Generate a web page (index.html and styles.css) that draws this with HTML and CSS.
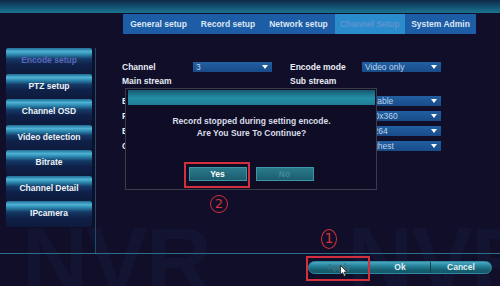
FILE: index.html
```html
<!DOCTYPE html>
<html>
<head>
<meta charset="utf-8">
<link rel="stylesheet" href="styles.css">
</head>
<body>
<div class="screen">
  <div class="wm wm-bl" aria-hidden="true">NVR</div>
  <div class="wm wm-br" aria-hidden="true">NVR</div>

  <div class="topbar"></div>

  <div class="main">
    <div class="sidebar">
      <div class="menu-btn active">Encode setup</div>
      <div class="menu-btn">PTZ setup</div>
      <div class="menu-btn">Channel OSD</div>
      <div class="menu-btn">Video detection</div>
      <div class="menu-btn">Bitrate</div>
      <div class="menu-btn">Channel Detail</div>
      <div class="menu-btn">IPcamera</div>
    </div>

    <div class="content">
      <div class="tabs">
        <div class="tab t1">General setup</div>
        <div class="tab t2">Record setup</div>
        <div class="tab t3">Network setup</div>
        <div class="tab t4 active">Channel Setup</div>
        <div class="tab t5">System Admin</div>
      </div>

      <div class="form">
        <div class="row first">
          <div class="lbl">Channel</div>
          <div class="sel">3</div>
          <div class="spacer"></div>
          <div class="lbl lbl2">Encode mode</div>
          <div class="sel">Video only</div>
        </div>
        <div class="row stream">
          <div class="lbl">Main stream</div>
          <div class="gap-sel"></div>
          <div class="spacer"></div>
          <div class="lbl lbl2">Sub stream</div>
        </div>
        <div class="row opt first-opt">
          <div class="lbl">Enable audio</div>
          <div class="sel">Disable</div>
          <div class="spacer"></div>
          <div class="lbl lbl2">Enable audio</div>
          <div class="sel">Disable</div>
        </div>
        <div class="row opt">
          <div class="lbl">Frame size</div>
          <div class="sel">1920x1080</div>
          <div class="spacer"></div>
          <div class="lbl lbl2">Frame size</div>
          <div class="sel">640x360</div>
        </div>
        <div class="row opt">
          <div class="lbl">Encode type</div>
          <div class="sel">H.264</div>
          <div class="spacer"></div>
          <div class="lbl lbl2">Encode type</div>
          <div class="sel">H.264</div>
        </div>
        <div class="row opt">
          <div class="lbl">Code quality</div>
          <div class="sel">Highest</div>
          <div class="spacer"></div>
          <div class="lbl lbl2">Code quality</div>
          <div class="sel">Highest</div>
        </div>
      </div>
    </div>
  </div>

  <div class="footer">
    <div class="btn-group">
      <div class="fbtn apply">Apply</div>
      <div class="fbtn">Ok</div>
      <div class="fbtn">Cancel</div>
    </div>
  </div>

  <div class="dialog">
    <div class="dlg-title"></div>
    <div class="dlg-msg">
      <div>Record stopped during setting encode.</div>
      <div>Are You Sure To Continue?</div>
    </div>
    <div class="dlg-btns">
      <div class="dbtn yes">Yes</div>
      <div class="dbtn no">No</div>
    </div>
  </div>

  <div class="mark box-yes"></div>
  <div class="mark box-apply"></div>
  <div class="num num2">2</div>
  <div class="num num1">1</div>

  <svg class="cursor" width="8" height="12" viewBox="0 0 8 12">
    <path d="M0.5 0.5 L0.5 9.5 L2.6 7.6 L4.2 11.2 L5.6 10.6 L4.1 7.1 L7 7.1 Z" fill="#ffffff" stroke="#222" stroke-width="0.8"/>
  </svg>
</div>
</body>
</html>
```

FILE: styles.css
```css
* { box-sizing: border-box; }
html, body { margin: 0; padding: 0; }
body { background: #100e28; }

.screen {
  position: relative;
  width: 500px;
  height: 286px;
  overflow: hidden;
  background: #100e28;
  font-family: "Liberation Sans", Arial, sans-serif;
  font-weight: bold;
  font-size: 8.5px;
  color: #e4e9f2;
}

.wm {
  position: absolute;
  z-index: 0;
  font-family: "Liberation Sans", Arial, sans-serif;
  font-weight: bold;
  font-size: 92px;
  line-height: 1;
  color: #131332;
  letter-spacing: -2px;
}
.wm-bl { left: 22px; top: 214px; }
.wm-br { left: 347px; top: 214px; }

.topbar {
  position: relative;
  z-index: 1;
  height: 13px;
  background: linear-gradient(to bottom, #0e2a48 0%, #145272 55%, #1b7590 100%);
}

.main {
  position: relative;
  z-index: 1;
  display: flex;
  height: 241px;
  border-bottom: 1px solid #2a6e8a;
}

.sidebar {
  width: 96px;
  margin-top: 35px;
  padding-left: 6px;
  border-right: 1px solid #1b4e68;
}

.menu-btn {
  width: 86px;
  height: 25.5px;
  padding-top: 8px;
  text-align: center;
  line-height: 9px;
  border-radius: 2px;
  color: #eef2f8;
  white-space: nowrap;
  background: linear-gradient(to bottom,
    #1f6d96 0%, #4fb2d4 14%, #2a84ac 26%, #143a66 42%, #0f2048 65%, #0d1a3c 100%);
}
.menu-btn.active { color: #5c66bc; }

.content {
  flex: 1;
  padding-left: 26px;
}

.tabs {
  display: flex;
  margin-top: 1px;
  margin-left: 1px;
  height: 20px;
  width: 353px;
  background: #1d5da6;
}
.tab {
  line-height: 20px;
  text-align: center;
  color: #dbe6f4;
  white-space: nowrap;
}
.t1 { width: 71px; }
.t2 { width: 68px; }
.t3 { width: 73px; }
.t4 { width: 70px; }
.t5 { width: 71px; }
.tab.active { background: #2b8ccd; color: #5f93cf; }

.form { display: flex; flex-direction: column; }
.row {
  display: flex;
  height: 10px;
  align-items: center;
  margin-top: 5px;
}
.row.first { margin-top: 28px; }
.row.stream { margin-top: 4px; }
.row.first-opt { margin-top: 10px; }

.lbl { width: 71px; white-space: nowrap; overflow: hidden; color: #e8ecf4; }
.lbl2 { width: 72px; }
.spacer { width: 18px; }
.gap-sel { width: 79px; }

.sel {
  position: relative;
  width: 79px;
  height: 10px;
  line-height: 10px;
  padding-left: 3px;
  font-weight: normal;
  color: #b9d2ec;
  background: linear-gradient(to bottom, #215fa2, #194b88);
}
.sel::after {
  content: "";
  position: absolute;
  right: 4px;
  top: 3px;
  width: 0;
  height: 0;
  border-left: 3px solid transparent;
  border-right: 3px solid transparent;
  border-top: 4px solid #ffffff;
}

.footer {
  position: relative;
  z-index: 1;
  display: flex;
  justify-content: flex-end;
  padding: 7px 8px 0 0;
}
.btn-group {
  display: flex;
  height: 13px;
  border-radius: 7px;
  overflow: hidden;
  border: 1px solid #2e8aa2;
  background: linear-gradient(to bottom, #4ba8c0 0%, #26849c 35%, #176274 70%, #14566a 100%);
}
.fbtn {
  width: 61px;
  line-height: 11px;
  text-align: center;
  color: #e2f0f5;
  border-left: 1px solid #0f4050;
}
.fbtn:first-child { border-left: none; width: 60px; }
.fbtn.apply { color: #3c7282; }

.dialog {
  position: absolute;
  z-index: 5;
  left: 125px;
  top: 88px;
  width: 252px;
  height: 102px;
  padding: 1px 1px 0 2px;
  background: #0f0d26;
  border: 1px solid #3a3c48;
}
.dlg-title {
  height: 15px;
  background: linear-gradient(to bottom, #17586e 0%, #2390a8 55%, #1f7c94 100%);
}
.dlg-msg {
  margin-top: 10px;
  text-align: center;
  line-height: 12px;
  color: #d8dde8;
}
.dlg-btns {
  display: flex;
  justify-content: center;
  gap: 9px;
  margin-top: 28px;
  padding-right: 1px;
}
.dbtn {
  width: 58px;
  height: 14px;
  line-height: 12px;
  text-align: center;
  border: 1px solid #3b97a8;
  background: linear-gradient(to bottom, #2a7a8c, #1b5d6e);
}
.dbtn.yes { color: #ffffff; }
.dbtn.no { color: #3f8a9a; }

.mark {
  position: absolute;
  z-index: 6;
  border: 2px solid #d2303e;
}
.box-yes { left: 184px; top: 162px; width: 66px; height: 26px; }
.box-apply { left: 306px; top: 256px; width: 64px; height: 25px; }

.num {
  position: absolute;
  z-index: 6;
  border: 1.5px solid #d2303e;
  border-radius: 50%;
  color: #d2303e;
  font-family: "DejaVu Sans", sans-serif;
  font-weight: normal;
  text-align: center;
}
.num2 { left: 210px; top: 195px; width: 18px; height: 18px; font-size: 13px; line-height: 15px; }
.num1 { left: 321px; top: 229px; width: 16px; height: 20px; font-size: 14px; line-height: 17px; }

.cursor {
  position: absolute;
  z-index: 7;
  left: 340px;
  top: 265px;
}
```
